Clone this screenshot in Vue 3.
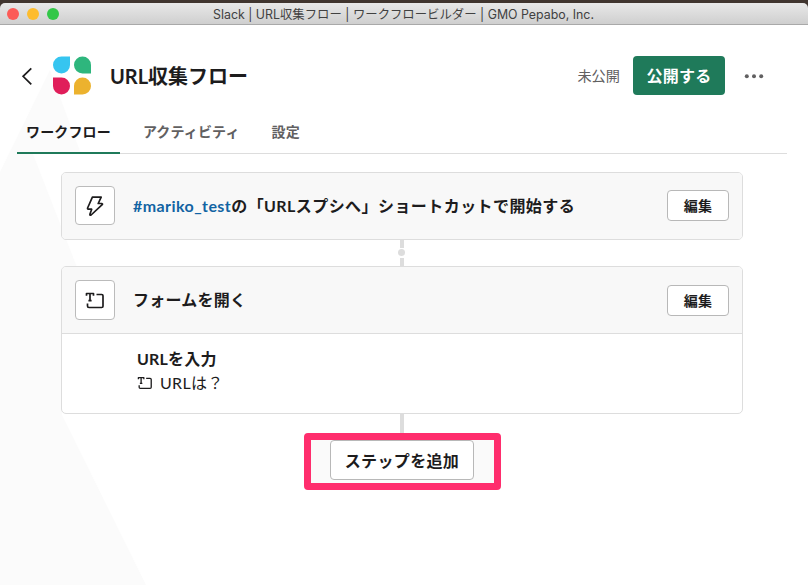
<template>
  <div class="window">
    <div class="titlebar">
      <div class="lights">
        <span class="light red"></span>
        <span class="light yellow"></span>
        <span class="light green"></span>
      </div>
      <svg class="title" width="808" height="22">
        <text x="213" y="16" textLength="381" lengthAdjust="spacingAndGlyphs">Slack | URL収集フロー | ワークフロービルダー | GMO Pepabo, Inc.</text>
      </svg>
    </div>

    <main class="content">
      <svg class="backdrop" width="160" height="560" viewBox="0 25 160 560">
        <path d="M0 172 50 70 81 154H33L80 275 62 415 146 585H0Z" />
      </svg>

      <header class="header">
        <svg class="back" width="12" height="18" viewBox="0 0 12 18">
          <path d="M10.300 1.300 2.100 9.300l8.200 8" />
        </svg>
        <svg class="logo" width="38" height="39" viewBox="0 0 38 39">
          <path fill="#36c5f0" d="M17 .5V9A8.500 8.500 0 1 1 8.500 .5z" />
          <path fill="#2eb67d" d="M38 17.500h-8.500A8.500 8.500 0 1 1 38 9z" />
          <path fill="#e01e5a" d="M0 21.500h8.500A8.500 8.500 0 1 1 0 30z" />
          <path fill="#ecb22e" d="M21 38.500V30A8.500 8.500 0 1 1 29.500 38.500z" />
        </svg>
        <h1>URL収集フロー</h1>
        <span class="status">未公開</span>
        <button class="publish">公開する</button>
        <svg class="more" width="20" height="6" viewBox="0 0 20 6">
          <circle cx="2.800" cy="3.200" r="2" />
          <circle cx="10" cy="3.200" r="2" />
          <circle cx="17.200" cy="3.200" r="2" />
        </svg>
      </header>

      <nav class="tabs">
        <a v-for="tab in tabs" :key="tab" class="tab" :class="{ active: tab === activeTab }" @click="activeTab = tab">{{ tab }}</a>
      </nav>

      <section class="flow">
        <div class="card">
          <div class="card-head trigger-head">
            <div class="icon-box bolt-box">
              <svg width="18" height="22" viewBox="0 0 18 22">
                <path d="M6.400 2.200H15.200L12.200 8.500H15.800Q17 8.800 16.200 9.700L5.100 20Q3.700 20.800 3.900 19.200L5.700 14.200H2.300Q1.300 14 1.600 13Z" />
              </svg>
            </div>
            <h2 class="trigger-title"><span class="channel">#mariko_test</span>の「URLスプシへ」ショートカットで開始する</h2>
            <button class="edit">編集</button>
          </div>
        </div>

        <div class="connector">
          <span class="bar"></span>
          <span class="dot"></span>
          <span class="bar"></span>
        </div>

        <div class="card">
          <div class="card-head form-head">
            <div class="icon-box">
              <svg width="20" height="18" viewBox="0 0 20 18">
                <path d="M1.500 4.700V2.500H8.500V4.700M5 2.500V9.700M3.400 9.700H6.600M11.500 3.500H16.700Q18 3.500 18 4.800V15.200Q18 16.500 16.700 16.500H4Q2.500 16.500 2.500 15V12.500" />
              </svg>
            </div>
            <h2>フォームを開く</h2>
            <button class="edit">編集</button>
          </div>
          <div class="card-body">
            <h3>URLを入力</h3>
            <p>
              <svg width="16" height="14" viewBox="0 0 20 18">
                <path d="M1.500 4.200V2H8.500V4.200M5 2V9.500M3.400 9.500H6.600M11.500 3H16.500Q18 3 18 4.500V14.500Q18 16 16.500 16H4Q2.500 16 2.500 14.500V12" />
              </svg>
              <span>URLは？</span>
            </p>
          </div>
        </div>

        <div class="stem"></div>
        <div class="highlight">
          <button class="add-step">ステップを追加</button>
        </div>
      </section>
    </main>
  </div>
</template>

<script setup>
import { ref } from "vue";

const tabs = ["ワークフロー", "アクティビティ", "設定"];
const activeTab = ref("ワークフロー");
</script>

<style>
body {
  background: #fff;
}
</style>

<style scoped>
.window {
  width: 808px;
  height: 585px;
  overflow: hidden;
  box-sizing: border-box;
  border-top: 3px solid #40352f;
  background: #40352f;
  color: #1d1c1d;
  font-family: Lato, "Noto Sans CJK JP", sans-serif;
}

.window * {
  box-sizing: border-box;
}

/* Title bar */
.titlebar {
  position: relative;
  height: 22px;
  background: linear-gradient(#e8e8e8, #cfcfcf);
  border-bottom: 1px solid #a9a9a9;
  border-radius: 5px 5px 0 0;
}

.lights {
  display: flex;
  gap: 8px;
  padding: 5px 7px;
}

.light {
  width: 12px;
  height: 12px;
  border-radius: 50%;
}

.red { background: #fc5b57; }
.yellow { background: #fdbc2e; }
.green { background: #33c748; }

.title {
  position: absolute;
  top: 0;
  left: 0;
  fill: #414141;
  font: 12.5px Inter, "Noto Sans CJK JP", sans-serif;
}

/* Header */
.content {
  position: relative;
  height: 560px;
  padding: 31px 21px 0 17px;
  background: #fff;
}

.backdrop {
  position: absolute;
  top: 0;
  left: 0;
  fill: #fbfbfb;
}

.header {
  position: relative;
  display: flex;
  align-items: center;
  height: 39px;
}

.back {
  margin-left: 4px;
  fill: none;
  stroke: #1d1c1d;
  stroke-width: 1.7;
}

.logo {
  margin-left: 19.5px;
}

h1 {
  margin: 0 auto 0 19.5px;
  font-size: 20px;
  font-weight: 700;
  line-height: 30px;
}

.status {
  padding-bottom: 2px;
  font-size: 14.2px;
  color: #616061;
}

button {
  padding: 0;
  border: 1px solid #b8b8b8;
  border-radius: 4px;
  background: #fff;
  color: #1d1c1d;
  font-family: inherit;
  font-weight: 700;
}

.publish {
  width: 92px;
  height: 39px;
  margin-left: 13px;
  padding-bottom: 2px;
  border: none;
  background: #1f7a5a;
  color: #fff;
  font-size: 16px;
  letter-spacing: 0.3px;
}

.more {
  margin: 0 23px 0 19px;
  fill: #616061;
}

/* Tabs */
.tabs {
  position: relative;
  display: flex;
  gap: 14px;
  height: 59px;
  border-bottom: 1px solid #dddddd;
}

.tab {
  height: 59px;
  padding: 26px 9px 0;
  color: #616061;
  font-size: 14px;
  font-weight: 700;
  line-height: 21px;
  letter-spacing: 0.15px;
}

.tab.active {
  color: #1d1c1d;
  border-bottom: 2px solid #1f7a5a;
}

/* Workflow steps */
.flow {
  position: relative;
  display: flex;
  flex-direction: column;
  align-items: center;
  width: 682px;
  margin: 18px 0 0 44px;
}

.card {
  width: 682px;
  border: 1px solid #dddddd;
  border-radius: 5px;
  background: #fff;
  overflow: hidden;
}

.card-head {
  display: flex;
  align-items: center;
  height: 66px;
  padding: 0 13px;
  background: #f8f8f8;
}

.trigger-head {
  padding-bottom: 1px;
}

.form-head {
  height: 67px;
  border-bottom: 1px solid #dddddd;
}

.icon-box {
  display: flex;
  align-items: center;
  justify-content: center;
  width: 40px;
  height: 40px;
  border: 1px solid #bbbbbb;
  border-radius: 4px;
  background: #fff;
}

.bolt-box {
  height: 39px;
}

.icon-box svg,
.card-body svg {
  fill: none;
  stroke: #1d1c1d;
  stroke-width: 1.7;
  stroke-linejoin: round;
}

h2 {
  margin: 0 auto 0 18px;
  font-size: 16px;
  font-weight: 700;
  line-height: 24px;
  letter-spacing: 0.25px;
}

.trigger-title {
  letter-spacing: 0.43px;
}

.channel {
  color: #1264a3;
}

.edit {
  width: 62px;
  height: 31px;
  padding-bottom: 1px;
  font-size: 14px;
  letter-spacing: 0.2px;
}

.card-body {
  height: 79px;
  padding: 13px 0 0 75px;
}

h3 {
  margin: 0;
  font-size: 16px;
  font-weight: 700;
  line-height: 24px;
  letter-spacing: 0.2px;
}

p {
  display: flex;
  align-items: center;
  gap: 7px;
  margin: 0;
  font-size: 16px;
  line-height: 24px;
  letter-spacing: 0.3px;
}

.connector {
  display: flex;
  flex-direction: column;
  align-items: center;
  height: 26px;
}

.bar {
  width: 4px;
  height: 8px;
  background: #dddddd;
}

.dot {
  width: 7px;
  height: 7px;
  margin: 1px 1px 2px 0;
  border-radius: 50%;
  background: #dddddd;
}

.stem {
  width: 4px;
  height: 19px;
  background: #dddddd;
}

.highlight {
  display: flex;
  width: 197px;
  height: 57px;
  margin-left: 1px;
  padding-left: 19px;
  border: 7px solid #ff2d6d;
  border-radius: 4px;
  background: #fafafa;
}

.add-step {
  width: 144px;
  height: 40px;
  font-size: 16px;
  letter-spacing: 0.35px;
}
</style>
